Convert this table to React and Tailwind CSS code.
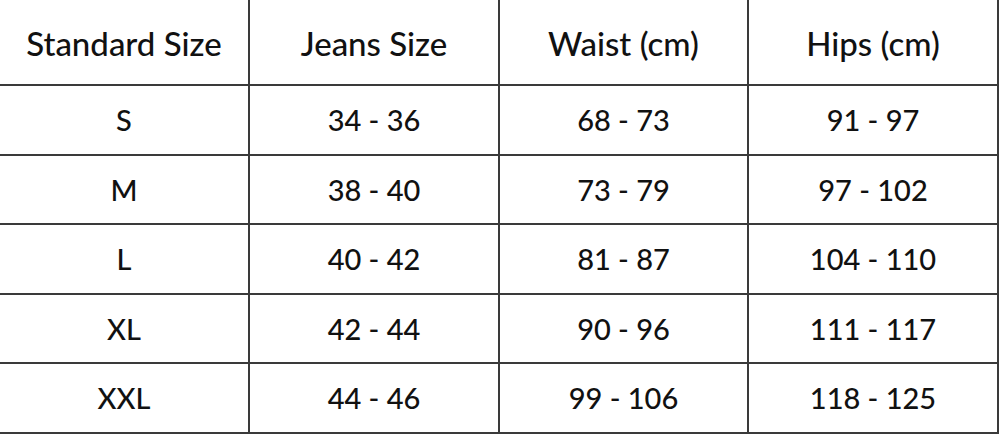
export default function App() {
  const header = ["Standard Size", "Jeans Size", "Waist (cm)", "Hips (cm)"];
  const rows = [
    ["S", "34 - 36", "68 - 73", "91 - 97"],
    ["M", "38 - 40", "73 - 79", "97 - 102"],
    ["L", "40 - 42", "81 - 87", "104 - 110"],
    ["XL", "42 - 44", "90 - 96", "111 - 117"],
    ["XXL", "44 - 46", "99 - 106", "118 - 125"],
  ];
  return (
    <div className="w-[1000px] h-[434px] bg-white overflow-hidden" style={{ fontFamily: "Lato, 'Open Sans', sans-serif" }}>
      <div className="grid grid-cols-[250px_250px_249px_250px] grid-rows-[86px_70px_69px_70px_69px_70px] text-[#111]">
        {header.map((c, j) => (
          <div key={"h" + j} className="flex items-center justify-center pt-1 text-[33px] font-medium border-r-2 border-b-2 border-[#3a3a3a]">
            {c}
          </div>
        ))}
        {rows.map((r, i) =>
          r.map((c, j) => (
            <div key={i + "-" + j} className="flex items-center justify-center text-[29px] font-medium border-r-2 border-b-2 border-[#3a3a3a]">
              {c}
            </div>
          ))
        )}
      </div>
    </div>
  );
}
